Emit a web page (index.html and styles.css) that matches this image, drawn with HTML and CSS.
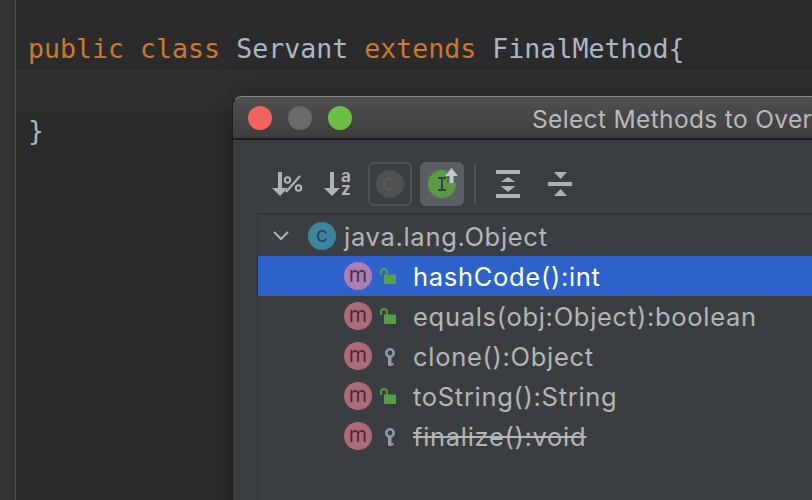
FILE: index.html
```html
<!DOCTYPE html>
<html lang="en">
<head>
<meta charset="utf-8">
<title>Select Methods to Override</title>
<link rel="stylesheet" href="styles.css">
</head>
<body>
<div class="ide">
  <div class="gutter"></div>
  <div class="editor">
    <div class="code-line first"><span class="kw">public class</span> Servant <span class="kw">extends</span> FinalMethod{</div>
    <div class="code-line caret"></div>
    <div class="code-line last">}</div>
  </div>
  <div class="dialog">
    <div class="titlebar">
      <span class="light red"></span>
      <span class="light grey"></span>
      <span class="light green"></span>
      <span class="title">Select Methods to Override</span>
    </div>
    <div class="toolbar">
      <svg class="tool" width="32" height="28" viewBox="0 0 32 28">
        <path d="M6 2h4v16h6l-8 8-8-8h6z" fill="#afb1b3"/>
        <circle cx="15.500" cy="10" r="2.700" fill="none" stroke="#afb1b3" stroke-width="2"/>
        <circle cx="26.500" cy="18" r="2.700" fill="none" stroke="#afb1b3" stroke-width="2"/>
        <path d="M28 6 L14 22" stroke="#afb1b3" stroke-width="2"/>
      </svg>
      <svg class="tool t2" width="28" height="28" viewBox="0 0 28 28">
        <path d="M6 2h4v16h6l-8 8-8-8h6z" fill="#afb1b3"/>
        <text x="17" y="12" class="az">a</text>
        <text x="17" y="25" class="az">z</text>
      </svg>
      <span class="toggle outlined">
        <svg width="28" height="28" viewBox="0 0 28 28">
          <circle cx="14" cy="14" r="14" fill="#4f5052"/>
          <path d="M18 10.500a5.500 5.500 0 1 0 0 7" fill="none" stroke="#5c5d5f" stroke-width="1.500"/>
        </svg>
      </span>
      <span class="toggle active">
        <svg width="44" height="44" viewBox="0 0 44 44">
          <circle cx="22" cy="22" r="14" fill="#5a9a47"/>
          <path d="M27 4h13v17H27z" fill="#5a6062"/>
          <path d="M18 16h8M22 16v12M18 28h8" fill="none" stroke="#3b3d38" stroke-width="2"/>
          <path d="M31.500 6l6.500 8h-4.500v7h-4v-7H25z" fill="#c5c8ca"/>
        </svg>
      </span>
      <span class="sep"></span>
      <svg class="tool" width="24" height="28" viewBox="0 0 24 28">
        <path d="M0 0h24v4H0zM0 24h24v4H0zM12 7l7.500 5h-15zM4.500 16h15L12 22z" fill="#afb1b3"/>
      </svg>
      <svg class="tool t6" width="24" height="24" viewBox="0 0 24 24">
        <path d="M0 10h24v4H0zM6 0h13l-6.500 7zM12.500 17l6.500 7H6z" fill="#afb1b3"/>
      </svg>
    </div>
    <div class="tree">
      <div class="row root">
        <svg class="chev" width="18" height="10" viewBox="0 0 18 10"><path d="M2 1l7 7 7-7" fill="none" stroke="#afb1b3" stroke-width="2"/></svg>
        <span class="badge cls">c</span>
        <span class="label">java.lang.Object</span>
      </div>
      <div class="row method selected">
        <span class="badge mth">m</span>
        <svg class="vis" width="20" height="20" viewBox="0 0 20 20"><use href="#unlock"/></svg>
        <span class="label">hashCode():int</span>
      </div>
      <div class="row method">
        <span class="badge mth">m</span>
        <svg class="vis" width="20" height="20" viewBox="0 0 20 20"><use href="#unlock"/></svg>
        <span class="label">equals(obj:Object):boolean</span>
      </div>
      <div class="row method">
        <span class="badge mth">m</span>
        <svg class="vis" width="20" height="20" viewBox="0 0 20 20"><use href="#key"/></svg>
        <span class="label">clone():Object</span>
      </div>
      <div class="row method">
        <span class="badge mth">m</span>
        <svg class="vis" width="20" height="20" viewBox="0 0 20 20"><use href="#unlock"/></svg>
        <span class="label">toString():String</span>
      </div>
      <div class="row method">
        <span class="badge mth">m</span>
        <svg class="vis" width="20" height="20" viewBox="0 0 20 20"><use href="#key"/></svg>
        <span class="label gone">finalize():void</span>
      </div>
    </div>
  </div>
</div>
<svg class="defs" width="0" height="0">
  <defs>
    <g id="unlock">
      <path d="M6 8.500h12V18H6z" fill="#55a047"/>
      <path d="M3 9V6a3 3 0 0 1 6 0v3" fill="none" stroke="#55a047" stroke-width="1.800"/>
    </g>
    <g id="key">
      <circle cx="12" cy="7" r="3.700" fill="none" stroke="#8a9ba8" stroke-width="2.500"/>
      <path d="M10 11h3.500v9H10zM13 17h2.500v2.500H13z" fill="#8a9ba8"/>
    </g>
  </defs>
</svg>
</body>
</html>
```
FILE: styles.css
```css
* { box-sizing: border-box; }
html, body { margin: 0; padding: 0; background: #2b2b2b; }
.ide {
  position: relative;
  display: flex;
  width: 812px;
  height: 500px;
  overflow: hidden;
  background: #2b2b2b;
}
.gutter {
  width: 16px;
  flex: none;
  background: #313335;
  border-right: 1px solid #555555;
}
.editor {
  flex: 1;
  padding-left: 12px;
  font-family: "DejaVu Sans Mono", monospace;
  font-size: 26.600px;
  color: #a9b7c6;
}
.kw { color: #cc7832; }
.code-line { white-space: pre; }
.first { height: 70px; padding-top: 29px; line-height: 40px; }
.caret { height: 41px; background: #303030; margin-left: -12px; }
.last { line-height: 40px; }
.dialog {
  position: absolute;
  left: 232px;
  top: 96px;
  width: 760px;
  height: 500px;
  background: #3b3e41;
  border: 1px solid #1c1c1c;
  border-top-color: #8a8a8a;
  border-radius: 10px 10px 0 0;
  box-shadow: 0 0 30px rgba(0, 0, 0, 0.35);
  font-family: Inter, "Liberation Sans", sans-serif;
}
.titlebar {
  display: flex;
  align-items: center;
  gap: 16px;
  height: 43px;
  padding-left: 15px;
  background: linear-gradient(#505050, #3d3d3d);
  border-bottom: 2px solid #1b1b1b;
  border-radius: 9px 9px 0 0;
}
.light { width: 24px; height: 24px; border-radius: 50%; flex: none; }
.red { background: #f1635c; }
.grey { background: #6a6a6a; }
.green { background: #6cbe45; }
.title {
  margin-left: 164px;
  padding-top: 3px;
  font-size: 24.500px;
  letter-spacing: 0.35px;
  color: #b9b9b9;
  white-space: nowrap;
}
.toolbar {
  display: flex;
  align-items: center;
  height: 73px;
  padding: 15px 0 0 39px;
}
.tool { flex: none; overflow: visible; }
.t2 { margin-left: 20px; }
.toggle {
  display: flex;
  align-items: center;
  justify-content: center;
  width: 44px;
  height: 44px;
  flex: none;
  border-radius: 6px;
}
.outlined { margin-left: 16px; border: 2px solid #505458; }
.active { margin-left: 8px; background: #5a6062; }
.sep { width: 2px; height: 40px; margin: 0 20px 0 10px; background: #505356; flex: none; }
.t6 { margin-left: 28px; }
.tree {
  margin-left: 24px;
  height: 300px;
  padding-top: 1px;
  border: 1px solid #303234;
  border-width: 2px 0 0 1px;
  font-size: 25.500px;
  letter-spacing: 0.7px;
  color: #b3b5b7;
}
.row {
  display: flex;
  align-items: center;
  height: 40px;
  white-space: nowrap;
}
.root { padding-left: 14px; }
.chev { margin-right: 18px; flex: none; }
.method { padding-left: 86px; }
.selected { background: #2c62c9; color: #ffffff; }
.badge {
  display: flex;
  align-items: center;
  justify-content: center;
  width: 28px;
  height: 28px;
  flex: none;
  border-radius: 50%;
  font-size: 21px;
  letter-spacing: 0;
  line-height: 1;
  padding-bottom: 3px;
}
.cls { background: #3d84a0; color: #23465a; margin-right: 8px; }
.mth { background: #ad6a78; color: #4a2a33; }
.selected .mth { background: #ae7db4; color: #44344c; }
.vis { margin: 0 15px 0 6px; flex: none; }
.gone { text-decoration: line-through; }
.az { font-family: Inter, "Liberation Sans", sans-serif; font-size: 17px; font-weight: 700; fill: #afb1b3; }
.defs { position: absolute; }
```
